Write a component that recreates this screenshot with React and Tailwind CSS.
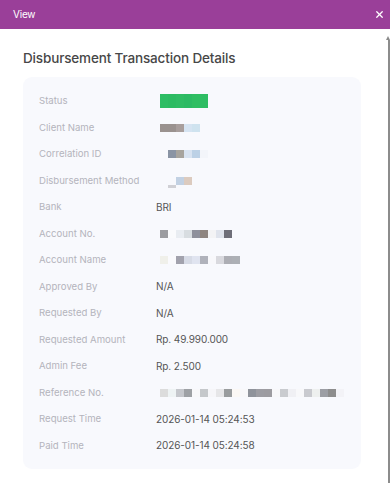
import { X } from "lucide-react";

const rows = [
  { label: "Status", blocks: { h: "h-[14px] -mt-[1px]", colors: ["#2dbd64", "#2cbb62", "#2fbc64", "#2cba63", "#2fbe62", "#2ebd63"] } },
  { label: "Client Name", blocks: { colors: ["#9a928f", "#9a928f", "#a89e9c", "#d6e4f2", "#cfe3ef"] } },
  { label: "Correlation ID", blocks: { colors: ["#f9fafd", "#8a94a4", "#a7a49e", "#d8e3f1", "#bcd1e6", "#f3f5fa"] } },
  { label: "Disbursement Method", method: true },
  { label: "Bank", value: "BRI" },
  { label: "Account No.", blocks: { colors: ["#9b9ca0", "#fafbfd", "#e9edf2", "#d8dde1", "#8e909c", "#8e8580", "#f3f3f5", "#dfe3ec", "#6e6e78"] } },
  { label: "Account Name", blocks: { colors: ["#f0f0ea", "#fafafd", "#a2a2ad", "#d7dbe6", "#e0e4f0", "#b0b2bb", "#f8f8fb", "#d9d9de", "#adaeb4", "#adb0b5"] } },
  { label: "Approved By", value: "N/A" },
  { label: "Requested By", value: "N/A" },
  { label: "Requested Amount", value: "Rp. 49.990.000" },
  { label: "Admin Fee", value: "Rp. 2.500" },
  {
    label: "Reference No.",
    blocks: {
      colors: [
        "#dcdcdc", "#eef3f4", "#c5c7cc", "#9ea1a5", "#f8f8fa", "#c5c8cb", "#f6f6f9", "#e6e6e8", "#999c9e", "#fbf8f5", "#f8f8fa",
        "#8f939b", "#9d9da3", "#9d9ca1", "#f8f8fa", "#c9cbcf", "#f0f0f4", "#f8f8fa", "#c9cacf", "#eef0ef", "#9c9ea4", "#8d8d8d", "#f3f3f7",
      ],
    },
  },
  { label: "Request Time", value: "2026-01-14 05:24:53" },
  { label: "Paid Time", value: "2026-01-14 05:24:58" },
];

function Blocks({ colors, h = "h-2" }) {
  return (
    <div className="flex ml-[4px]">
      {colors.map((c, i) => (
        <div key={i} className={`w-2 ${h}`} style={{ backgroundColor: c }} />
      ))}
    </div>
  );
}

export default function App() {
  return (
    <div className="relative w-[390px] h-[483px] bg-white overflow-hidden" style={{ fontFamily: "Inter, 'Noto Sans', sans-serif" }}>
      {/* header */}
      <div className="h-[29px] bg-[#9a3f99] flex items-center justify-between pl-[13px] pr-[5px]">
        <span className="text-[10px] text-white tracking-[-0.2px]">View</span>
        <X className="w-[11px] h-[11px] text-white" strokeWidth={2.75} />
      </div>

      {/* scrollbar */}
      <div className="absolute right-0 top-[36px] bottom-0 w-[3px] flex flex-col items-end">
        <div className="w-0 h-0 border-l-[2px] border-r-[2px] border-b-[4px] border-l-transparent border-r-transparent border-b-[#8a8a8a]" />
        <div className="w-[2px] flex-1 bg-[#8c8c8c]" />
      </div>

      <div className="px-[23px] pt-[19px]">
        <h2 className="text-[13.5px] leading-[20px] font-medium text-[#474747] tracking-[-0.15px]">
          Disbursement Transaction Details
        </h2>

        <div className="mt-[9px] w-[338px] rounded-[9px] bg-[#f8f9fd] pl-[16px] pt-[11px] pb-[10px]">
          {rows.map((r) => (
            <div key={r.label} className="h-[26.5px] flex items-center">
              <div className="w-[117px] text-[9.6px] text-[#b4b4bc]">{r.label}</div>
              <div className="flex-1 text-[10px] text-[#555555] tracking-[-0.1px]">
                {r.value && r.value}
                {r.blocks && <Blocks colors={r.blocks.colors} h={r.blocks.h} />}
                {r.method && (
                  <div className="flex ml-[12px] items-end">
                    <div className="w-2 h-[3px] bg-[#d0d0d5] -mb-[3px]" />
                    <div className="w-2 h-2 bg-[#c2d1e3]" />
                    <div className="w-2 h-2 bg-[#dccbbf]" />
                  </div>
                )}
              </div>
            </div>
          ))}
        </div>
      </div>
    </div>
  );
}
